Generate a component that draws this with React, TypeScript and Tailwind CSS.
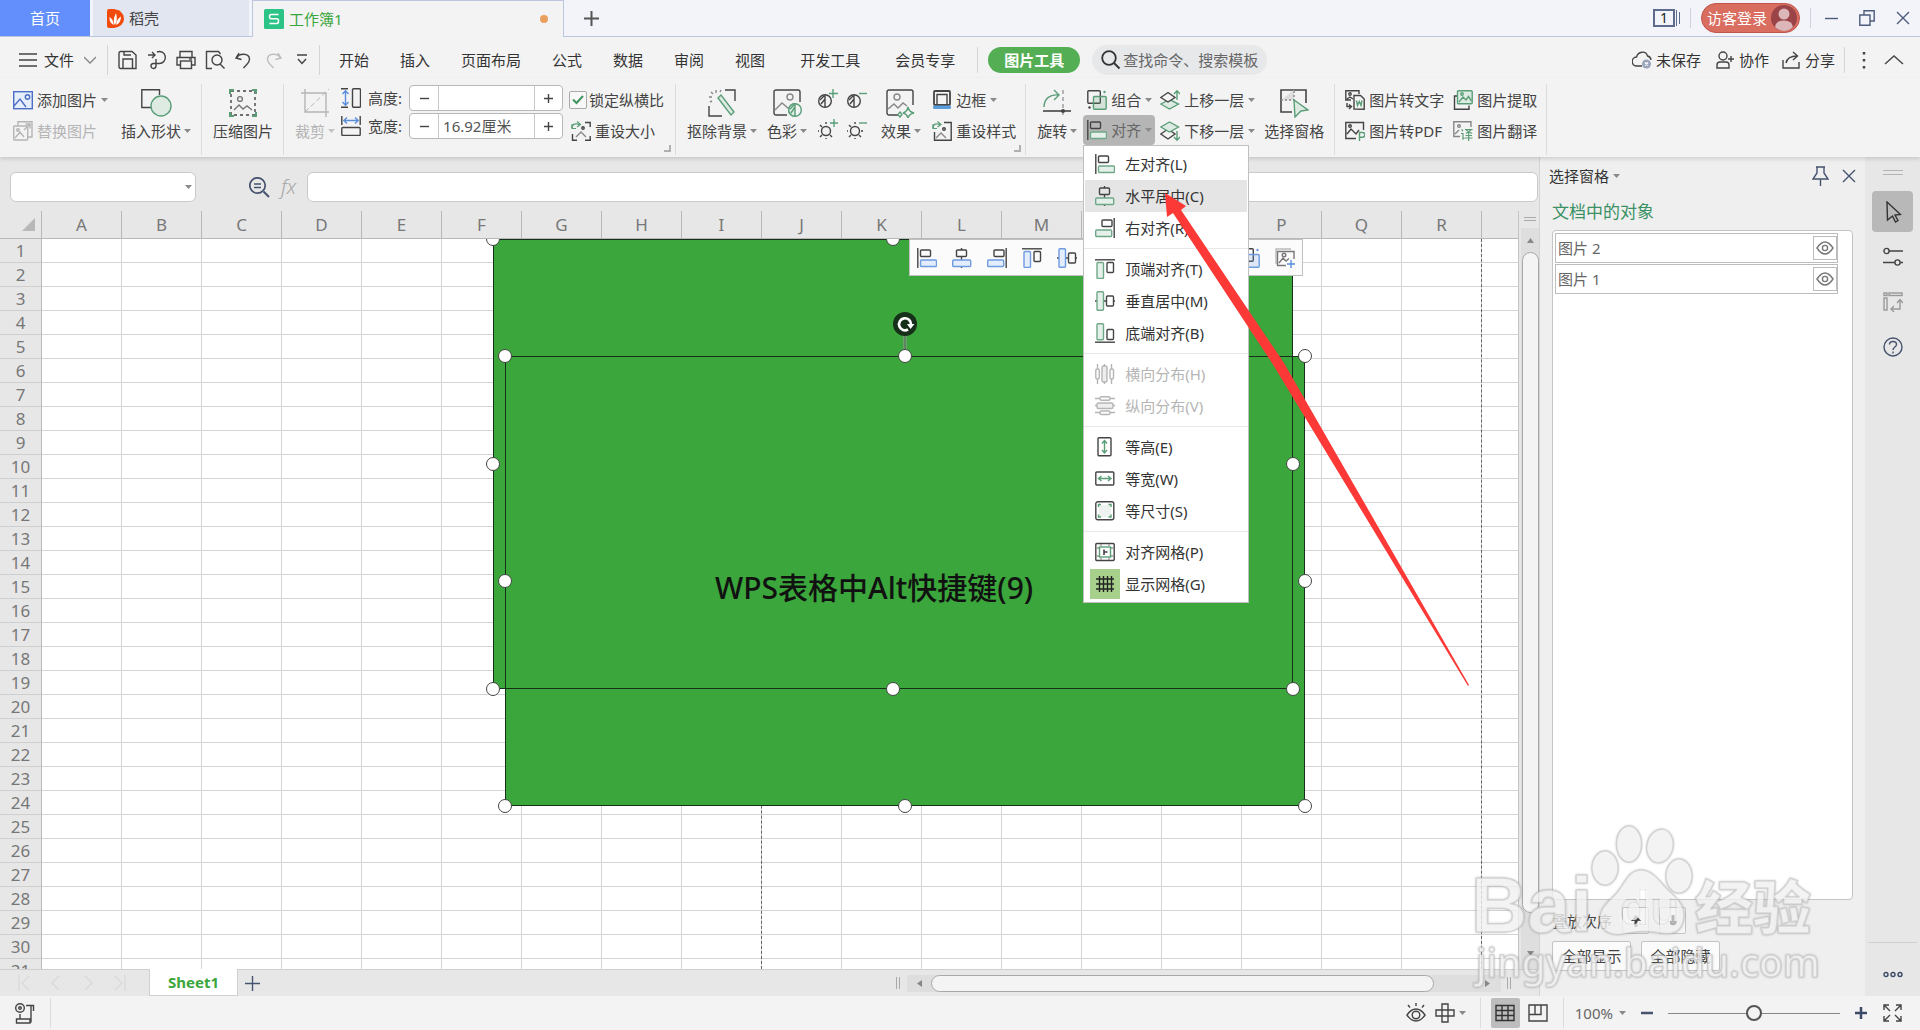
import * as React from "react";
import { clsx } from "clsx";

const INK = "#444444"
const GREEN = "#5a9e78"
const PALE_GREEN = "#deebe3"

interface SvgProps {
  w?: number
  h?: number
  stroke?: string
  children: React.ReactNode
}

function Svg({ w = 20, h = 20, stroke = INK, children }: SvgProps) {
  return (
    <svg width={w} height={h} viewBox={`0 0 ${w} ${h}`} fill="none" stroke={stroke} strokeWidth="1.4" className="shrink-0" aria-hidden="true">
      {children}
    </svg>
  )
}

function Caret({ light }: { light?: boolean }) {
  return (
    <svg width="7" height="4" viewBox="0 0 7 4" className="shrink-0" aria-hidden="true">
      <path d="M0 0H7L3.5 4Z" fill={light ? "#c4c4c4" : "#8a8a8a"} />
    </svg>
  )
}

/* ---------- align icons, shared by the menu, the ribbon and the floating bar ---------- */

type AlignKind = "left" | "center" | "right" | "top" | "middle" | "bottom"

function AlignIcon({ kind, blue }: { kind: AlignKind, blue?: boolean }) {
  const accent = { stroke: blue ? "#6f9be0" : "#6fa888", fill: blue ? "#e3edfb" : "#e6f0ea" }
  return (
    <Svg>
      {kind === "left" && <><path d="M.8 0V20" /><rect x="3.5" y="2" width="10" height="6.5" rx="1" /><rect x="3.5" y="12" width="16" height="6.5" rx="1" {...accent} /></>}
      {kind === "center" && <><path d="M9.5 0V2M9.5 8.5V12M9.5 18.5V20" /><rect x="4.5" y="2" width="10" height="6.5" rx="1" /><rect x=".7" y="12" width="18" height="6.5" rx="1" {...accent} /></>}
      {kind === "right" && <><path d="M19.2 0V20" /><rect x="7" y="2" width="10" height="6.5" rx="1" /><rect x=".7" y="12" width="16" height="6.5" rx="1" {...accent} /></>}
      {kind === "top" && <><path d="M0 .8H20" /><rect x="2" y="3.5" width="6.5" height="16" rx="1" {...accent} /><rect x="12" y="3.5" width="6.5" height="10" rx="1" /></>}
      {kind === "middle" && <><path d="M0 10H2M8.5 10H12M18.5 10H20" /><rect x="2" y=".8" width="6.5" height="18.4" rx="1" {...accent} /><rect x="11.5" y="5" width="7" height="10" rx="1" /></>}
      {kind === "bottom" && <><path d="M0 19.2H20" /><rect x="2" y=".8" width="6.5" height="16" rx="1" {...accent} /><rect x="12" y="6.5" width="6.5" height="10" rx="1" /></>}
    </Svg>
  )
}

const icons = {
  addPicture: <Svg stroke="#4a6fc4"><rect x=".7" y="1.7" width="18.6" height="17" fill="#e6edfb" /><path d="M1 16L7 9L13 17" /><circle cx="14.5" cy="7" r="2.2" /></Svg>,
  replacePicture: <Svg stroke="#b5b5b5"><rect x=".7" y="5" width="14" height="14" rx="1" /><path d="M5 5V.8H19V16H15M2 17L7 11L11 16M11 9L17 3M12.5 3H17V7.5" /><circle cx="5" cy="9" r="1.3" /></Svg>,
  shapes: <Svg w={31} h={28}><path d="M10.5 18.5H.8V.8H18.5V6" /><circle cx="20" cy="17" r="10" stroke={GREEN} fill={PALE_GREEN} /></Svg>,
  compress: <Svg w={28} h={28}><rect x="2" y="2" width="24" height="24" strokeDasharray="3 3" /><path d="M1 5V1H5M23 1H27V5M27 23V27H23M5 27H1V23" stroke={GREEN} strokeWidth="2" /><path d="M5 21L10 16L14 20L18 17L23 21" stroke="#777" /><circle cx="11" cy="10" r="2.4" stroke="#777" /></Svg>,
  crop: <Svg w={28} h={28} stroke="#b5b5b5"><path d="M4 0V23H28M0 4H25V28" /><path d="M4 23L28 0" strokeDasharray="5 3" strokeWidth="1" /></Svg>,
  height: <Svg><path d="M0 .8H9M0 19.2H9" strokeDasharray="7 2" /><path d="M4.5 3V17M1.5 6L4.5 2.8L7.5 6M1.5 14L4.5 17.2L7.5 14" stroke="#5a8edb" /><rect x="11.5" y=".8" width="8" height="18.4" rx="1" /></Svg>,
  width: <Svg><path d="M.8 0V9M19.2 0V9" /><path d="M3 4.5H17M6 1.5L2.8 4.5L6 7.5M14 1.5L17.2 4.5L14 7.5" stroke="#5a8edb" /><rect x=".8" y="11.5" width="18.4" height="8" rx="1" /></Svg>,
  resetSize: <Svg><path d="M1 7C1 3 4 2 9 3.5" stroke={GREEN} /><path d="M6 .5L9.5 3.5L6 6M1 3V7.5H5" stroke={GREEN} strokeWidth="1.2" /><path d="M14 1.5H19.2V6M19.2 15V19.2H14M6 19.2H1.5V13" /><path d="M5 16L10 11L15 16" stroke="#888" /><circle cx="12" cy="7" r="1.2" /></Svg>,
  removeBg: <Svg w={28} h={28}><path d="M17 1H27V12M1 17V27H14" /><path d="M10 9L13 6L26 23L23 26Z" stroke={GREEN} fill={PALE_GREEN} /><path d="M8 1V4M1 8H4M3 3L5 5M13 1L12 3M2 13L4 12" stroke="#888" /></Svg>,
  color: <Svg w={29} h={29}><path d="M14 26H3A2 2 0 0 1 1 24V3A2 2 0 0 1 3 1H25A2 2 0 0 1 27 3V13" /><path d="M2 21L9 14L16 20" stroke="#888" /><circle cx="17" cy="8" r="3" stroke="#888" /><circle cx="22" cy="21" r="6.3" stroke={GREEN} fill="#f3f3f3" /><path d="M22 14.7A6.3 6.3 0 0 0 22 27.3ZM18 24L22 18M17 20L21 16" stroke={GREEN} fill={PALE_GREEN} /></Svg>,
  effect: <Svg w={30} h={29}><path d="M12 26H3A2 2 0 0 1 1 24V3A2 2 0 0 1 3 1H25A2 2 0 0 1 27 3V16" /><path d="M2 20L8 15L12 19L17 14L21 17" stroke="#888" /><circle cx="11" cy="8" r="3" stroke="#888" /><path d="M22 18Q23 23 28 24Q23 25 22 29Q21 25 17 24Q21 23 22 18ZM14 23L16 25.5L14 28L12 25.5Z" stroke={GREEN} /></Svg>,
  contrastUp: <Svg><circle cx="7" cy="12" r="6.3" /><path d="M7 6V18M3 15L7 10M2 11L6 7" /><path d="M15 0V9M11 4.5H20" stroke={GREEN} /></Svg>,
  contrastDown: <Svg><circle cx="7" cy="12" r="6.3" /><path d="M7 6V18M3 15L7 10M2 11L6 7" /><path d="M12 4.5H20" stroke={GREEN} /></Svg>,
  brightUp: <Svg><circle cx="8" cy="12" r="4.5" /><path d="M8 5V3M8 19V21M1 12H0M2 6L4 8M2 18L4 16M14 18L12 16" /><path d="M16 0V8M12 4H20" stroke={GREEN} /></Svg>,
  brightDown: <Svg><circle cx="8" cy="12" r="4.5" /><path d="M8 5V3M8 19V21M1 12H0M2 6L4 8M2 18L4 16M14 18L12 16M14 12H16" /><path d="M12 4H20" stroke={GREEN} /></Svg>,
  border: <Svg><rect x="2" y="1" width="16" height="14" rx="1" strokeWidth="1.8" /><path d="M5 15V4.5H15V15" /><rect x="1" y="15.5" width="18" height="3.5" rx="1.5" fill="#5a9bdc" stroke="none" /></Svg>,
  resetStyle: <Svg><path d="M1 7C1 3 4 2 8 3.5" stroke={GREEN} /><path d="M5.5 .5L9 3.5L5.5 6M1 3V7.5H5" stroke={GREEN} strokeWidth="1.2" /><path d="M12 1.5H19.2V19.2H2.5V11" /><path d="M4 17L9 12L14 17" stroke="#888" /><circle cx="12" cy="8" r="1.3" /></Svg>,
  rotate: <Svg w={28} h={29}><path d="M20 1V29" stroke="#999" strokeDasharray="4 3" /><path d="M1 18C1 10 7 5 15 6M11 1L16 6L11 11" stroke={GREEN} /><path d="M0 22H28" strokeWidth="1.6" /><circle cx="20" cy="22" r="2" fill={INK} stroke="none" /></Svg>,
  group: <Svg><rect x=".8" y=".8" width="12.5" height="12.5" rx="1" /><rect x="6.5" y="6.5" width="12.7" height="12.7" rx="1" stroke={GREEN} fill="#5a9e7833" /><circle cx="17.5" cy="2" r="1.2" fill={GREEN} stroke="none" /><circle cx="2.5" cy="17.5" r="1.2" fill={INK} stroke="none" /></Svg>,
  bringUp: <Svg><path d="M.8 14L9.5 9.5L18.5 14L9.5 19Z" stroke={GREEN} fill={PALE_GREEN} /><path d="M.8 7.5L8 2.5L15 7.5L8 12Z" fill="#f3f3f3" /><path d="M17 10V1M14 4L17 .8L20 4" stroke={GREEN} /></Svg>,
  sendDown: <Svg><path d="M.8 13L8 8L15 13L8 18Z" /><path d="M.8 6L9.5 1L18.5 6L9.5 11Z" stroke={GREEN} fill={PALE_GREEN} /><path d="M17 10V19M14 16L17 19.2L20 16" stroke={GREEN} /></Svg>,
  selectPane: <Svg w={30} h={29}><path d="M13 23H2V1H27V14" strokeWidth="1.6" /><path d="M2 11H15V1" stroke="#888" strokeDasharray="2 2" fill="#ddd" /><path d="M15 11L29 21L22 22L16 28Z" stroke={GREEN} fill={PALE_GREEN} /></Svg>,
  toText: <Svg><path d="M6 10H.8V.8H14V4M2 9L5 7L8 9" /><circle cx="5" cy="4" r="1.2" /><path d="M9 19V5.5H15.5L19.2 9V19.2Z" fill="#f3f3f3" /><path d="M11.5 10.5L12.5 15.5L14.3 11.5L16 15.5L17 10.5" stroke={GREEN} /><path d="M2 13V16.5H6M4 14.5L6.5 16.5L4 19" /></Svg>,
  toPdf: <Svg><path d="M11 17.5H.8V1.5H18.5V9M2 13L6 8L11 13L14 9" /><circle cx="5" cy="5" r="1.3" /><path d="M14.5 20V11.5H17.5A2.3 2.3 0 0 1 17.5 16.2H14.5" stroke={GREEN} /></Svg>,
  extract: <Svg><path d="M4 6H1.5V19.2H16V15.5" /><rect x="4.5" y=".8" width="14.7" height="13" rx="1" stroke={GREEN} fill={PALE_GREEN} /><path d="M6 12L10 7L13 10L15.5 6.5L18.5 11" stroke={GREEN} /><circle cx="9" cy="4" r="1.2" stroke={GREEN} /></Svg>,
  translate: <Svg><path d="M7 15.5H.8V.8H18V6M2 13L6 9" stroke="#888" /><circle cx="6" cy="5" r="1.3" stroke="#888" /><path d="M8.5 8.5L10 10M8 12.5H10V18L11.5 17M12 8.5H18.5L13 12.5M13 9L19 12.5M15.7 12V20M12.5 14.5H19M12 17H19.5" stroke={GREEN} strokeWidth="1.2" /></Svg>,
}

/* ---------- ribbon building blocks ---------- */

interface RibbonButtonProps {
  icon: React.ReactNode
  label: string
  caret?: boolean
  disabled?: boolean
  className?: string
}

function BigButton({ icon, label, caret, disabled, className }: RibbonButtonProps) {
  return (
    <button disabled={disabled} className={clsx("flex flex-col items-center pt-[5px]", disabled && "text-[#b5b5b5]", className)}>
      <span className="flex h-7 items-start">{icon}</span>
      <span className="mt-1 flex items-center gap-[3px] whitespace-nowrap">{label}{caret && <Caret light={disabled} />}</span>
    </button>
  )
}

function RowButton({ icon, label, caret, disabled, className }: RibbonButtonProps) {
  return (
    <button disabled={disabled} className={clsx("flex h-[31px] items-center gap-1 whitespace-nowrap", disabled && "text-[#b5b5b5]", className)}>
      {icon}{label}{caret && <Caret light={disabled} />}
    </button>
  )
}

function Divider({ className }: { className?: string }) {
  return <div className={clsx("h-[71px] w-px shrink-0 bg-[#dcdcdc]", className)} />
}

function CornerMark() {
  return (
    <button aria-label="更多设置" className="absolute right-[5px] bottom-[3px] h-[7px] w-[7px] border-r-2 border-b-2 border-[#b0b0b0]" />
  )
}

function Spinner({ id, icon, label, value }: { id: string, icon: React.ReactNode, label: string, value: string }) {
  return (
    <div className="flex h-[26px] items-center">
      {icon}
      <label htmlFor={id} className="ml-[7px] w-[41px] whitespace-nowrap">{label}</label>
      <div className="flex h-[26px] w-[154px] rounded border border-[#b8b8b8] bg-white text-[#555]">
        <button aria-label={`${label}减`} className="flex w-[29px] items-center justify-center border-r border-[#c8c8c8]">
          <Svg w={9} h={9}><path d="M0 4.5H9" /></Svg>
        </button>
        <input id={id} defaultValue={value} className="w-0 flex-1 px-1 outline-none" />
        <button aria-label={`${label}加`} className="flex w-[28px] items-center justify-center border-l border-[#c8c8c8]">
          <Svg w={9} h={9}><path d="M0 4.5H9M4.5 0V9" /></Svg>
        </button>
      </div>
    </div>
  )
}

/* ---------- align menu ---------- */

interface MenuEntry {
  label: string
  icon: React.ReactNode
  disabled?: boolean
  hovered?: boolean
  checked?: boolean
}

const alignMenu: MenuEntry[][] = [
  [
    { label: "左对齐(L)", icon: <AlignIcon kind="left" /> },
    { label: "水平居中(C)", icon: <AlignIcon kind="center" />, hovered: true },
    { label: "右对齐(R)", icon: <AlignIcon kind="right" /> },
  ],
  [
    { label: "顶端对齐(T)", icon: <AlignIcon kind="top" /> },
    { label: "垂直居中(M)", icon: <AlignIcon kind="middle" /> },
    { label: "底端对齐(B)", icon: <AlignIcon kind="bottom" /> },
  ],
  [
    {
      label: "横向分布(H)", disabled: true,
      icon: <Svg stroke="#b5b5b5"><path d="M2.5 0V5M2.5 15V20M9.5 0V2M9.5 18V20M16.5 0V5M16.5 15V20" /><rect x=".8" y="5" width="3.5" height="10" rx="1.5" /><rect x="7" y="2" width="5" height="16" rx="1.5" fill="#eee" /><rect x="15" y="5" width="3.5" height="10" rx="1.5" /></Svg>,
    },
    {
      label: "纵向分布(V)", disabled: true,
      icon: <Svg stroke="#b5b5b5"><path d="M0 2.5H5M15 2.5H20M0 9.5H2M18 9.5H20M0 16.5H5M15 16.5H20" /><rect x="5" y=".8" width="10" height="3.5" rx="1.5" /><rect x="2" y="7" width="16" height="5.5" rx="1.5" fill="#eee" /><rect x="5" y="15" width="10" height="3.5" rx="1.5" /></Svg>,
    },
  ],
  [
    { label: "等高(E)", icon: <Svg><rect x="3" y=".8" width="13" height="18" rx="1" /><path d="M9.5 4V16M7 6.5L9.5 3.5L12 6.5M7 13L9.5 16L12 13" stroke={GREEN} /></Svg> },
    { label: "等宽(W)", icon: <Svg><rect x=".8" y="3" width="18" height="13" rx="1" /><path d="M3.5 9.5H16M6.5 7L3.5 9.5L6.5 12M13 7L16 9.5L13 12" stroke={GREEN} /></Svg> },
    { label: "等尺寸(S)", icon: <Svg><rect x=".8" y=".8" width="18" height="18" rx="2" /><rect x="4" y="4" width="12" height="12" fill="#eef3ef" stroke="none" /><path d="M3.5 6V3.5H6M13.5 3.5H16V6M16 13.5V16H13.5M6 16H3.5V13.5" stroke={GREEN} /></Svg> },
  ],
  [
    { label: "对齐网格(P)", icon: <Svg><rect x=".8" y="1.5" width="18.4" height="17" rx="1" /><path d="M1 6H4M16 6H19M1 14H4M16 14H19M6 2V4M14 2V4M6 16V18M14 16V18" stroke="#999" /><rect x="4.5" y="5" width="11" height="10" stroke={GREEN} fill="#fff" /><path d="M9 7.5V13M9 10H12.5" strokeWidth="1.6" /></Svg> },
    { label: "显示网格(G)", icon: <Svg w={18} h={18} stroke="#222"><path d="M3.5 1V17M7.5 1V17M11.5 1V17M15.5 1V17M0 4H18M0 9H18M0 14H18" /></Svg>, checked: true },
  ],
]

function AlignMenu() {
  return (
    <div role="menu" className="absolute top-full left-0 z-30 w-[166px] border border-[#c0c0c0] bg-white py-[2px] text-[#333]">
      {alignMenu.map((group, index) => (
        <div key={index} className={clsx("px-px", index > 0 && "mt-1 border-t border-[#e8e8e8] pt-1")}>
          {group.map(item => (
            <button
              key={item.label}
              role="menuitem"
              disabled={item.disabled}
              className={clsx("flex h-8 w-full items-center gap-[5px] whitespace-nowrap", item.disabled && "text-[#b5b5b5]", item.hovered && "bg-[#e5e5e5]")}
            >
              <span className={clsx("ml-[5px] flex size-[30px] items-center justify-center", item.checked && "bg-[#a8d08d]")}>{item.icon}</span>
              {item.label}
            </button>
          ))}
        </div>
      ))}
    </div>
  )
}

/* ---------- window chrome ---------- */

function TitleBar() {
  return (
    <header className="flex h-[37px] shrink-0 items-stretch justify-between border-b border-[#bcc6dc] bg-[#f3f4f9]">
      <div className="flex items-start gap-[3px]">
        <button className="h-9 w-[90px] bg-[#628ffb] text-center text-white">首页</button>
        <button className="flex h-9 w-[156px] items-center gap-[5px] bg-[#e1e6f0] pl-[14px]">
          <svg width="17" height="19" viewBox="0 0 17 19" aria-hidden="true">
            <path d="M0 2Q0 0 2 0H7Q17 2 17 9.5Q17 17 7 19H2Q0 19 0 17Z" fill="#f2490c" />
            <path d="M8 16Q5 12 9 4Q11 11 8 16ZM7 16Q2 14 2.5 8Q6 10 7 16ZM9 16Q14 14 14 7.5Q9.5 10 9 16Z" fill="#fff" />
          </svg>
          稻壳
        </button>
        <button className="flex h-[37px] w-[312px] items-center gap-[5px] border border-b-0 border-[#bcc6dc] bg-[#f3f3f3] pr-[15px] pl-[11px] text-[#3aa63b]">
          <svg width="20" height="20" viewBox="0 0 20 20" aria-hidden="true">
            <rect width="20" height="20" rx="1.5" fill="#2cc387" />
            <path d="M14.5 5.5H7Q5.5 5.5 5.5 7.5Q5.5 9.8 7 9.8H13Q14.5 9.8 14.5 12Q14.5 14.5 13 14.5H5.5" fill="none" stroke="#fff" strokeWidth="1.5" />
          </svg>
          <span className="flex-1 text-left">工作簿1</span>
          <span className="size-2 rounded-full bg-[#e8a05c]" />
        </button>
        <button aria-label="新建标签" className="ml-3 flex h-9 w-6 items-center justify-center">
          <Svg w={15} h={15} stroke="#555"><path d="M7.5 0V15M0 7.5H15" strokeWidth="2" /></Svg>
        </button>
      </div>
      <div className="flex items-center pr-[10px]">
        <button aria-label="窗口列表" className="flex h-[18px] items-center">
          <span className="flex h-[18px] w-[22px] items-center justify-center border-2 border-[#5d6c8c] text-[14px] text-[#222]">1</span>
          <span className="ml-px h-4 w-px bg-[#5d6c8c]" /><span className="ml-[2px] h-3 w-px bg-[#5d6c8c]" />
        </button>
        <div className="mx-[10px] h-5 w-px bg-[#cdd2de]" />
        <button className="flex h-[30px] w-[99px] items-center justify-between rounded-full border border-[#c0564c] bg-[#d96d60] pr-[2px] pl-[5px] text-white">
          <span className="whitespace-nowrap">访客登录</span>
          <svg width="26" height="26" viewBox="0 0 26 26" aria-hidden="true">
            <circle cx="13" cy="13" r="13" fill="#9a4448" />
            <circle cx="13" cy="9" r="5.5" fill="#dcb6b8" />
            <path d="M4 22Q5 15.5 13 15.5Q21 15.5 22 22Q18 26 13 26Q8 26 4 22Z" fill="#dcb6b8" />
          </svg>
        </button>
        <div className="mr-[14px] ml-[10px] h-5 w-px bg-[#cdd2de]" />
        <button aria-label="最小化"><Svg w={13} h={13} stroke="#4d5c7c"><path d="M0 6.5H13" /></Svg></button>
        <button aria-label="还原" className="mx-[21px]"><Svg w={16} h={16} stroke="#4d5c7c"><path d="M.8 5H11V15.2H.8ZM5 5V.8H15.2V11H11" /></Svg></button>
        <button aria-label="关闭"><Svg w={14} h={14} stroke="#4d5c7c"><path d="M1 1L13 13M13 1L1 13" /></Svg></button>
      </div>
    </header>
  )
}

const tabs = ["开始", "插入", "页面布局", "公式", "数据", "审阅", "视图"]

function MenuBar() {
  return (
    <nav className="flex h-[41px] shrink-0 items-center justify-between pt-1 pr-4 pl-[19px] text-[#333]">
      <div className="flex items-center whitespace-nowrap">
        <button className="flex items-center">
          <Svg w={18} h={14}><path d="M0 1H18M0 7H18M0 13H18" /></Svg>
          <span className="ml-[7px]">文件</span>
          <span className="ml-[10px]"><Svg w={12} h={8} stroke="#888"><path d="M0 1L6 7L12 1" /></Svg></span>
        </button>
        <div className="mr-[10px] ml-[11px] h-[30px] w-px bg-[#d6d6d6]" />
        <div className="flex items-center gap-[9px]">
          <button aria-label="保存"><Svg><path d="M2.5 1.5H14L18 5V18.5H2.5A1.5 1.5 0 0 1 1 17V3A1.5 1.5 0 0 1 2.5 1.5ZM5 18V9H14.5V18M6 1.5V5H13" /></Svg></button>
          <button aria-label="输出为PDF"><Svg><path d="M1 5H8M5 2L8 5L5 8" /><path d="M9 9V16A2.5 2.5 0 1 1 6 13.5H12A6 6 0 1 0 10 2" /></Svg></button>
          <button aria-label="打印"><Svg><path d="M4 7V1.5H16V7M4 15H1V7.5H19V15H16" /><rect x="4.5" y="11" width="11" height="7.5" /><path d="M13 9H16" /></Svg></button>
          <button aria-label="打印预览"><Svg><path d="M7 18.5H1.5V1.5H13.5L15.5 4" /><circle cx="12" cy="10" r="5" /><path d="M15 14L19.5 18.5" /></Svg></button>
          <button aria-label="撤销"><Svg><path d="M5 3L2 8L7.5 9.5M2.5 8C5 3 15 2.5 15.5 9C15.5 13 12 15 9.5 18" /></Svg></button>
          <button aria-label="恢复" disabled><Svg stroke="#bdbdbd"><path d="M15 3L18 8L12.5 9.5M17.5 8C15 3 5 2.5 4.5 9C4.5 13 8 15 10.5 18" /></Svg></button>
          <button aria-label="自定义快速访问工具栏" className="ml-[5px]"><Svg w={10} h={12}><path d="M0 1H10M1 5L5 9.5L9 5" /></Svg></button>
        </div>
        <div className="mr-[13px] ml-3 h-[30px] w-px bg-[#d6d6d6]" />
        <div className="ml-[6px] flex gap-[31px]">
          {tabs.map(tab => <button key={tab}>{tab}</button>)}
        </div>
        <button className="ml-[35px]">开发工具</button>
        <button className="ml-[35px]">会员专享</button>
        <div className="mr-[10px] ml-[22px] h-[26px] w-px bg-[#d6d6d6]" />
        <button className="h-[26px] w-[92px] rounded-full bg-[#54ae54] font-bold text-white">图片工具</button>
        <label className="ml-3 flex h-[30px] w-[175px] items-center gap-[2px] rounded-full bg-[#e6e8ea] pl-[9px]">
          <Svg stroke="#333"><circle cx="8" cy="8" r="6.8" strokeWidth="1.8" /><path d="M13 13L18.5 18.5" strokeWidth="2" /></Svg>
          <input aria-label="查找" placeholder="查找命令、搜索模板" className="w-0 flex-1 outline-none placeholder:text-[#666]" />
        </label>
      </div>
      <div className="flex items-center whitespace-nowrap">
        <button className="flex items-center gap-1">
          <Svg><path d="M10 16H5A4.5 4.5 0 0 1 4.5 7C6 1 14 .5 15.5 6A4.5 4.5 0 0 1 19 10" /><circle cx="14.5" cy="14" r="4.5" fill="#9aa5ba" stroke="none" /><path d="M13 12.5L16 15.5M16 12.5L13 15.5" stroke="#fff" /></Svg>
          未保存
        </button>
        <button className="ml-[15px] flex items-center gap-[5px]">
          <Svg w={18}><circle cx="7" cy="6" r="4" /><path d="M1 18V15A3 3 0 0 1 4 12H10A3 3 0 0 1 13 15V18ZM12 9H18M15 6V12" /></Svg>
          协作
        </button>
        <button className="ml-[13px] flex items-center gap-[5px]">
          <Svg w={18}><path d="M1 10V18H17V12M4 13C5 8 8 6 15 6M11 2L15.5 6L11 10" /></Svg>
          分享
        </button>
        <div className="mx-[9px] h-[26px] w-px bg-[#d6d6d6]" />
        <button aria-label="更多" className="w-5"><Svg w={20} h={18}><path d="M10 1V3.5M10 8V10.5M10 15V17.5" strokeWidth="2.5" /></Svg></button>
        <button aria-label="收起功能区" className="ml-[10px]"><Svg w={20} h={12}><path d="M1 10L10 2L19 10" /></Svg></button>
      </div>
    </nav>
  )
}

function Ribbon() {
  const [isOpen, setIsOpen] = React.useState(true)

  return (
    <section className="relative z-20 flex h-[79px] shrink-0 items-start bg-[#f3f3f3] pt-[6px] pl-[13px] whitespace-nowrap shadow-[0_2px_4px_#00000022]">
      <div className="flex items-start">
        <div>
          <RowButton icon={icons.addPicture} label="添加图片" caret />
          <RowButton icon={icons.replacePicture} label="替换图片" disabled />
        </div>
        <BigButton className="ml-[13px]" icon={icons.shapes} label="插入形状" caret />
        <Divider className="mr-[11px] ml-[10px]" />
        <BigButton icon={icons.compress} label="压缩图片" />
        <Divider className="mr-[11px] ml-[10px]" />
      </div>

      <div className="relative flex items-start">
        <BigButton icon={icons.crop} label="裁剪" caret disabled />
        <div className="ml-[6px] flex flex-col gap-[2px] pt-px">
          <Spinner id="picture-height" icon={icons.height} label="高度:" value="" />
          <Spinner id="picture-width" icon={icons.width} label="宽度:" value="16.92厘米" />
        </div>
        <div className="ml-[6px]">
          <label className="relative flex h-[31px] items-center gap-[2px]">
            <input type="checkbox" defaultChecked className="size-[18px] appearance-none rounded-xs border border-[#aaa] bg-[#f8f8f8]" />
            <svg width="12" height="10" viewBox="0 0 12 10" className="absolute left-[3px]" aria-hidden="true"><path d="M1 4.5L4.5 8L11 1" fill="none" stroke="#3f9460" strokeWidth="2" /></svg>
            锁定纵横比
          </label>
          <RowButton className="pl-[2px]" icon={icons.resetSize} label="重设大小" />
        </div>
        <Divider className="ml-[11px]" />
        <CornerMark />
      </div>

      <div className="relative flex items-start pl-[11px]">
        <BigButton icon={icons.removeBg} label="抠除背景" caret />
        <BigButton className="ml-[10px]" icon={icons.color} label="色彩" caret />
        <div className="ml-[11px] grid grid-cols-2 gap-x-[9px] gap-y-[10px] pt-[5px]">
          <button aria-label="增加对比度">{icons.contrastUp}</button>
          <button aria-label="降低对比度">{icons.contrastDown}</button>
          <button aria-label="增加亮度">{icons.brightUp}</button>
          <button aria-label="降低亮度">{icons.brightDown}</button>
        </div>
        <BigButton className="ml-[14px]" icon={icons.effect} label="效果" caret />
        <div className="ml-[11px]">
          <RowButton icon={icons.border} label="边框" caret />
          <RowButton icon={icons.resetStyle} label="重设样式" />
        </div>
        <Divider className="ml-[9px]" />
        <CornerMark />
      </div>

      <div className="flex items-start pl-[11px]">
        <BigButton icon={icons.rotate} label="旋转" caret />
        <div className="ml-[6px]">
          <RowButton className="px-1" icon={icons.group} label="组合" caret />
          <div className="relative">
            <button
              aria-haspopup="menu"
              aria-expanded={isOpen}
              onClick={() => setIsOpen(!isOpen)}
              className="flex h-[30px] w-[72px] items-center gap-1 rounded bg-[#b5b5b5] px-1 text-[#666]"
            >
              <AlignIcon kind="left" />对齐<Caret />
            </button>
            {isOpen && <AlignMenu />}
          </div>
        </div>
        <div className="ml-[4px]">
          <RowButton icon={icons.bringUp} label="上移一层" caret />
          <RowButton icon={icons.sendDown} label="下移一层" caret />
        </div>
        <BigButton className="ml-[9px]" icon={icons.selectPane} label="选择窗格" />
        <Divider className="mr-[10px] ml-[10px]" />
        <div>
          <RowButton icon={icons.toText} label="图片转文字" />
          <RowButton icon={icons.toPdf} label="图片转PDF" />
        </div>
        <div className="ml-[9px]">
          <RowButton icon={icons.extract} label="图片提取" />
          <RowButton icon={icons.translate} label="图片翻译" />
        </div>
        <Divider className="ml-[9px]" />
      </div>
    </section>
  )
}

/* ---------- sheet ---------- */

const columns = [..."ABCDEFGHIJKLMNOPQR".split(""), ""]
const rows = Array.from({ length: 31 }, (_, i) => i + 1)

function Grid() {
  return (
    <table className="w-[1562px] table-fixed border-separate border-spacing-0 bg-white text-[17px] leading-[22px] text-[#777]">
      <colgroup>
        <col className="w-[42px]" />
        {columns.map(column => <col key={column} className="w-[80px]" />)}
      </colgroup>
      <thead>
        <tr>
          <th className="h-7 border-r border-b border-[#b8b8b8] bg-[#e7e7e7] p-0">
            <svg width="13" height="13" viewBox="0 0 13 13" className="ml-[22px]" aria-hidden="true"><path d="M13 0V13H0Z" fill="#b8b8b8" /></svg>
          </th>
          {columns.map(column => (
            <th key={column} className="h-7 border-r border-b border-[#b8b8b8] bg-[#e7e7e7] p-0 font-normal">{column}</th>
          ))}
        </tr>
      </thead>
      <tbody>
        {rows.map(row => (
          <tr key={row}>
            <th className="h-6 border-r border-b border-r-[#b8b8b8] border-b-[#cfcfcf] bg-[#e7e7e7] p-0 font-normal">{row}</th>
            {columns.map(column => <td key={column} className="h-6 border-r border-b border-[#d4d4d4] p-0" />)}
          </tr>
        ))}
      </tbody>
    </table>
  )
}

const handles = [
  "left-0 top-0", "left-1/2 top-0", "left-full top-0",
  "left-0 top-1/2", "left-full top-1/2",
  "left-0 top-full", "left-1/2 top-full", "left-full top-full",
]

function SelectionFrame({ className, children }: { className: string, children?: React.ReactNode }) {
  return (
    <div className={clsx("absolute h-[450px] w-[800px]", className)}>
      <span className="absolute inset-0 border border-[#17301a]" />
      {children}
      {handles.map(handle => (
        <span key={handle} className={clsx("absolute size-[14px] -translate-1/2 rounded-full border border-[#444] bg-white", handle)} />
      ))}
    </div>
  )
}

function FloatingBar() {
  return (
    <div className="absolute top-0 left-[867px] flex h-[37px] w-[394px] items-center justify-between border border-[#c0c0c0] bg-[#fbfbfb] px-[7px]">
      <div className="flex gap-[15px]">
        <button aria-label="左对齐"><AlignIcon kind="left" blue /></button>
        <button aria-label="水平居中"><AlignIcon kind="center" blue /></button>
        <button aria-label="右对齐"><AlignIcon kind="right" blue /></button>
        <button aria-label="顶端对齐"><AlignIcon kind="top" blue /></button>
        <button aria-label="垂直居中"><AlignIcon kind="middle" blue /></button>
      </div>
      <div className="flex gap-[15px]">
        <button aria-label="组合">
          <Svg><rect x=".8" y=".8" width="12.5" height="12.5" rx="1" /><rect x="6.5" y="6.5" width="12.7" height="12.7" rx="1" stroke="#6f9be0" fill="#6f9be033" /><circle cx="17.5" cy="2" r="1.2" fill="#6f9be0" stroke="none" /></Svg>
        </button>
        <button aria-label="添加图片">
          <Svg stroke="#777"><path d="M1 16V1H16" stroke="#bbb" /><path d="M11 17.5H2.5V3.5H19V11M4 15L8 10L11 13L14 10.5" /><circle cx="9" cy="7" r="1.8" /><path d="M16 12V20M12 16H20" stroke="#5a8edb" /></Svg>
        </button>
      </div>
    </div>
  )
}

function Canvas() {
  return (
    <div className="absolute top-7 right-0 bottom-0 left-[42px] overflow-hidden">
      {/* page breaks */}
      <div className="absolute top-0 bottom-0 left-[719px] border-l border-dashed border-[#666]" />
      <div className="absolute top-0 bottom-0 left-[1439px] border-l border-dashed border-[#666]" />

      <div className="absolute top-0 left-[451px] h-[450px] w-[800px] bg-[#3aa63b]" />
      <div className="absolute top-[117px] left-[463px] h-[450px] w-[800px] bg-[#3aa63b]">
        <p className="absolute top-[210px] left-[210px] text-[30px] leading-[44px] font-medium whitespace-nowrap text-[#111]">WPS表格中Alt快捷键(9)</p>
      </div>

      <SelectionFrame className="top-0 left-[451px]" />
      <SelectionFrame className="top-[117px] left-[463px]">
        <span className="absolute -top-6 left-1/2 h-6 w-[3px] -translate-x-1/2 border-x border-[#a9d9a9] bg-[#17301a]" />
        <svg width="24" height="24" viewBox="0 0 24 24" className="absolute -top-11 left-1/2 -translate-x-1/2" aria-hidden="true">
          <circle cx="12" cy="12" r="12" fill="#17301a" />
          <path d="M15 17.5A6 6 0 1 1 18 12.5" fill="none" stroke="#fff" strokeWidth="2.6" />
          <path d="M14 12H21.5L17.5 17Z" fill="#fff" />
        </svg>
      </SelectionFrame>

      <FloatingBar />
    </div>
  )
}

function Worksheet() {
  return (
    <main className="flex min-w-0 flex-1 flex-col bg-[#e7e7e7]">
      <div className="flex h-[54px] shrink-0 items-center pt-[6px] pr-px pl-[10px]">
        <div className="flex h-[30px] w-[186px] items-center rounded-md border border-[#cacaca] bg-white pr-[3px]">
          <input aria-label="名称框" className="w-0 flex-1 px-2 outline-none" />
          <button aria-label="名称列表"><Caret /></button>
        </div>
        <button aria-label="浏览公式" className="ml-[53px]">
          <Svg w={21} h={21} stroke="#46536f"><circle cx="8.5" cy="8.5" r="7.7" strokeWidth="1.7" /><path d="M14.5 14.5L20 20" strokeWidth="2" /><path d="M5 7H12M5 10.5H12" /></Svg>
        </button>
        <button className="ml-[9px] w-[19px] font-['Noto_Sans',sans-serif] text-[20px] font-light text-[#a8a8a8] italic">fx</button>
        <input aria-label="编辑栏" className="ml-[9px] h-[30px] min-w-0 flex-1 rounded-md border border-[#cacaca] bg-white px-2 outline-none" />
      </div>

      <div className="flex min-h-0 flex-1">
        <div className="relative min-w-0 flex-1 overflow-hidden">
          <Grid />
          <Canvas />
        </div>
        <div className="flex w-[21px] shrink-0 flex-col items-center border-l border-[#c4c4c4] pl-[2px]">
          <div className="mt-[6px] mb-[7px] h-[4px] w-3 border-y border-[#aaa]" />
          <div className="flex w-full flex-1 flex-col items-center bg-[#dedede]">
            <button aria-label="向上滚动" className="flex h-6 items-center"><svg width="7" height="5" viewBox="0 0 7 5"><path d="M0 5H7L3.5 0Z" fill="#888" /></svg></button>
            <div className="w-[17px] flex-1 rounded-full border border-[#a8a8a8] bg-[#f4f4f4]" />
            <div className="h-[38px]" />
            <button aria-label="向下滚动" className="flex h-[18px] items-start"><svg width="7" height="5" viewBox="0 0 7 5"><path d="M0 0H7L3.5 5Z" fill="#888" /></svg></button>
          </div>
        </div>
      </div>

      <div className="flex h-[27px] shrink-0 items-stretch justify-between border-t border-[#cfcfcf] pr-[28px]">
        <div className="flex items-center">
          <div className="flex w-[149px] justify-center gap-[20px] pr-[5px]">
            <button aria-label="首个工作表"><Svg w={12} h={16} stroke="#dadada"><path d="M1 0V16M11 1L4 8L11 15" /></Svg></button>
            <button aria-label="上一个工作表"><Svg w={12} h={16} stroke="#dadada"><path d="M9 1L2 8L9 15" /></Svg></button>
            <button aria-label="下一个工作表"><Svg w={12} h={16} stroke="#dadada"><path d="M3 1L10 8L3 15" /></Svg></button>
            <button aria-label="最后工作表"><Svg w={12} h={16} stroke="#dadada"><path d="M11 0V16M1 1L8 8L1 15" /></Svg></button>
          </div>
          <button className="-mt-px h-[27px] w-[89px] border-x border-b border-[#d0d0d0] bg-white font-bold text-[#3aa63b]">Sheet1</button>
          <button aria-label="新建工作表" className="ml-[7px]"><Svg w={15} h={15} stroke="#46536f"><path d="M7.5 0V15M0 7.5H15" /></Svg></button>
        </div>
        <div className="flex items-center">
          <div className="mr-[7px] h-3 w-[4px] border-x border-[#aaa]" />
          <div className="flex h-[17px] w-[594px] items-center bg-[#dedede]">
            <button aria-label="向左滚动" className="flex w-6 justify-center"><svg width="5" height="7" viewBox="0 0 5 7"><path d="M5 0V7L0 3.5Z" fill="#888" /></svg></button>
            <div className="h-[17px] flex-1 rounded-full border border-[#a8a8a8] bg-[#f4f4f4]" />
            <button aria-label="向右滚动" className="flex w-[67px] justify-end pr-[11px]"><svg width="5" height="7" viewBox="0 0 5 7"><path d="M0 0V7L5 3.5Z" fill="#888" /></svg></button>
          </div>
          <div className="ml-[6px] h-3 w-[4px] border-x border-[#aaa]" />
        </div>
      </div>
    </main>
  )
}

/* ---------- right side ---------- */

function SelectionPane() {
  return (
    <aside className="flex w-[326px] shrink-0 flex-col border-l border-[#d4d4d4] bg-[#efefef] px-3 pt-[9px] pb-[25px]">
      <div className="-mx-[3px] flex items-center justify-between">
        <button className="flex items-center gap-1 text-[#333]">选择窗格<Caret /></button>
        <div className="flex items-center gap-[13px]">
          <button aria-label="固定"><Svg w={17} stroke="#46536f"><path d="M4 1H13M5 1V7L1 13H16L12 7V1M8.5 13V20" /></Svg></button>
          <button aria-label="关闭窗格"><Svg w={14} h={14} stroke="#46536f"><path d="M1 1L13 13M13 1L1 13" /></Svg></button>
        </div>
      </div>
      <h2 className="mt-[14px] text-[17px] leading-6 text-[#3a9164]">文档中的对象</h2>
      <ul className="mt-[6px] flex flex-1 flex-col gap-px rounded border border-[#c4c4c4] bg-white p-[2px] pr-[14px]">
        {["图片 2", "图片 1"].map(name => (
          <li key={name} className="flex h-[30px] items-center justify-between border border-[#bcbcbc] pl-[2px] text-[#666]">
            {name}
            <button aria-label={`隐藏${name}`} className="flex h-6 w-6 items-center justify-center border border-[#bcbcbc]">
              <Svg w={18} h={14} stroke="#777"><path d="M1 7Q5 1 9 1Q13 1 17 7Q13 13 9 13Q5 13 1 7Z" /><circle cx="9" cy="7" r="2.6" /></Svg>
            </button>
          </li>
        ))}
      </ul>
      <div className="mt-[7px] flex items-center">
        <span>叠放次序</span>
        <button aria-label="上移" className="ml-[10px] flex size-[27px] items-center justify-center rounded-xs border border-[#c4c4c4] bg-[#f6f6f6]">
          <Svg w={10} h={12} stroke="none"><path d="M5 0L10 6H6.5V12H3.5V6H0Z" fill="#444" /></Svg>
        </button>
        <button aria-label="下移" disabled className="ml-[10px] flex size-[27px] items-center justify-center rounded-xs border border-[#c4c4c4] bg-[#f6f6f6]">
          <Svg w={10} h={12} stroke="none"><path d="M5 12L10 6H6.5V0H3.5V6H0Z" fill="#b8b8b8" /></Svg>
        </button>
      </div>
      <div className="mt-[7px] flex gap-[10px]">
        <button className="h-[30px] w-[79px] rounded-xs border border-[#c4c4c4] bg-[#fbfbfb]">全部显示</button>
        <button className="h-[30px] w-[79px] rounded-xs border border-[#c4c4c4] bg-[#fbfbfb]">全部隐藏</button>
      </div>
    </aside>
  )
}

function SideBar() {
  return (
    <div className="flex w-[55px] shrink-0 flex-col items-center bg-[#e7e7e7] pt-[13px] pb-[18px]">
      <div className="h-[5px] w-5 border-y border-[#b4b4b4]" />
      <button aria-label="选择" className="mt-4 flex size-[41px] items-center justify-center rounded bg-[#b8b8b8]">
        <Svg w={18} h={22} stroke="#333"><path d="M3 1L16.5 13.5L11 14L14 19.5L11.5 21L8.5 15L3.5 19Z" /></Svg>
      </button>
      <button aria-label="属性" className="mt-[15px]"><Svg w={20} h={20}><circle cx="3.5" cy="4" r="2.6" /><path d="M6 4H20M0 15.5H12M17 15.5H20" /><circle cx="14.5" cy="15.5" r="2.6" /></Svg></button>
      <button aria-label="转置" className="mt-[25px]"><Svg w={20} h={20} stroke="#999"><rect x="1" y="1" width="3" height="2.5" /><rect x="6" y="1" width="13" height="2.5" /><rect x="1" y="6" width="3" height="12" /><path d="M9 17H17V8M14 11L17 7.5L20 11M11 14L8 17L11 20" /></Svg></button>
      <button aria-label="帮助" className="mt-[25px]"><Svg w={20} h={20} stroke="#46536f"><circle cx="10" cy="10" r="9" /><path d="M6.5 7.5C6.5 3.5 13.5 3.5 13.5 7.5C13.5 10 10 10 10 13M10 14.5V16.5" /></Svg></button>
      <div className="mt-auto mb-7 h-px w-[49px] bg-[#d0d0d0]" />
      <button aria-label="更多窗格"><Svg w={20} h={7} stroke="#3c4a68"><circle cx="3" cy="3.5" r="2" /><circle cx="10" cy="3.5" r="2" /><circle cx="17" cy="3.5" r="2" /></Svg></button>
    </div>
  )
}

function StatusBar() {
  return (
    <footer className="flex h-[34px] shrink-0 items-center justify-between bg-[#f3f3f3] pr-[18px] pl-[15px]">
      <div className="flex items-center">
        <button aria-label="录制宏"><Svg w={21} h={22}><circle cx="5" cy="6" r="4.3" /><circle cx="5" cy="6" r="1.3" /><path d="M11 3.5H18.5V9M16 3.5V20.5M5 12V17M1.5 17H15V21H1.5Z" /></Svg></button>
        <div className="ml-[14px] h-[30px] w-px bg-[#dcdcdc]" />
      </div>
      <div className="flex items-center">
        <button aria-label="护眼模式"><Svg w={20} h={20}><path d="M1 12Q5 6 10 6Q15 6 19 12Q15 18 10 18Q5 18 1 12ZM10 0V3M2 2L4 4.5M18 2L16 4.5" /><circle cx="10" cy="12" r="3.8" /></Svg></button>
        <button aria-label="阅读模式" className="ml-[9px] flex items-center gap-1"><Svg w={20} h={20}><path d="M7 1H13V19H7ZM1 7H19V13H1Z" /></Svg><Caret /></button>
        <div className="mr-[10px] ml-[14px] h-[30px] w-px bg-[#dcdcdc]" />
        <button aria-label="普通视图" className="flex h-[30px] w-[29px] items-center justify-center rounded-xs bg-[#bdbdbd]"><Svg w={20} h={18} stroke="#333"><path d="M1 1.5H19V16.5H1ZM1 6.5H19M1 11.5H19M7 1.5V16.5M13 1.5V16.5" /></Svg></button>
        <button aria-label="分页预览" className="ml-2"><Svg w={20} h={18}><path d="M1 1H19V17H1ZM1 10.5H13V1M7 1V10.5" /></Svg></button>
        <div className="mr-[11px] ml-[15px] h-[30px] w-px bg-[#dcdcdc]" />
        <button className="flex items-center gap-[6px] text-[#666]">100%<Caret /></button>
        <button aria-label="缩小" className="ml-[15px]"><Svg w={12} h={12} stroke="#46536f"><path d="M0 6H12" strokeWidth="2.5" /></Svg></button>
        <input
          type="range"
          aria-label="缩放"
          defaultValue={50}
          className="mx-[15px] h-4 w-[172px] appearance-none bg-[linear-gradient(#888,#888)] bg-[length:100%_1px] bg-center bg-no-repeat [&::-webkit-slider-thumb]:size-4 [&::-webkit-slider-thumb]:appearance-none [&::-webkit-slider-thumb]:rounded-full [&::-webkit-slider-thumb]:border-2 [&::-webkit-slider-thumb]:border-[#555] [&::-webkit-slider-thumb]:bg-[#f3f3f3]"
        />
        <button aria-label="放大"><Svg w={12} h={12} stroke="#3c4a68"><path d="M0 6H12M6 0V12" strokeWidth="2.5" /></Svg></button>
        <button aria-label="全屏" className="ml-[16px]"><Svg w={19} h={18}><path d="M7 7L1 1M1 6V1H6M12 7L18 1M13 1H18V6M7 11L1 17M1 12V17H6M12 11L18 17M18 12V17H13" /></Svg></button>
      </div>
    </footer>
  )
}

/* ---------- marks over the whole window ---------- */

function Pointer() {
  return (
    <svg width="310" height="500" viewBox="0 0 310 500" className="pointer-events-none absolute top-[190px] left-[1162px] z-40" aria-hidden="true">
      <path d="M3 3L24 16L19 20L122 173L307 495L306 496L110 173L11 23L5 27Z" fill="#fc3937" />
    </svg>
  )
}

function Watermark() {
  return (
    <svg width="360" height="180" viewBox="0 0 360 180" className="pointer-events-none absolute right-[90px] bottom-[30px] z-40 drop-shadow-[0_0_1px_#00000044]" aria-hidden="true">
      {/* the paw is cut out where "du" stands */}
      <mask id="paw-cutout">
        <rect width="360" height="180" fill="#fff" />
        <text x="149" y="105" fontSize="50" fill="#000" className="font-['Liberation_Sans',sans-serif] font-bold">du</text>
      </mask>
      <g fill="#ffffff" fillOpacity="0.75" stroke="#c4c4c4" strokeOpacity="0.6" strokeWidth="1.5" strokeLinejoin="round">
        <ellipse cx="135" cy="48" rx="13" ry="17" />
        <ellipse cx="159" cy="24" rx="12.5" ry="18" />
        <ellipse cx="190" cy="26" rx="13" ry="17" transform="rotate(12 190 26)" />
        <ellipse cx="209" cy="56" rx="13" ry="17" />
        <path mask="url(#paw-cutout)" d="M171 50C183 50 190 62 199 71C212 82 216 90 213 102C209 117 194 114 184 112C175 111 167 111 158 113C146 116 131 115 130 99C130 85 142 80 149 70C156 60 160 50 171 50Z" />
        <text x="1" y="112" fontSize="78" className="font-['Liberation_Sans',sans-serif] font-bold">Bai</text>
        <text x="225" y="109" fontSize="58" className="font-['Noto_Sans_CJK_SC',sans-serif] font-black">经验</text>
        <text x="6" y="157" fontSize="39" className="font-['Noto_Sans',sans-serif] font-medium">jingyan.baidu.com</text>
      </g>
    </svg>
  )
}

export default function App() {
  return (
    <div className="relative flex h-screen flex-col overflow-hidden bg-[#f3f3f3] font-['Noto_Sans','Noto_Sans_CJK_SC',sans-serif] text-[15px] leading-5 text-[#444]">
      <TitleBar />
      <MenuBar />
      <Ribbon />
      <div className="flex min-h-0 flex-1">
        <Worksheet />
        <SelectionPane />
        <SideBar />
      </div>
      <StatusBar />
      <Pointer />
      <Watermark />
    </div>
  )
}
